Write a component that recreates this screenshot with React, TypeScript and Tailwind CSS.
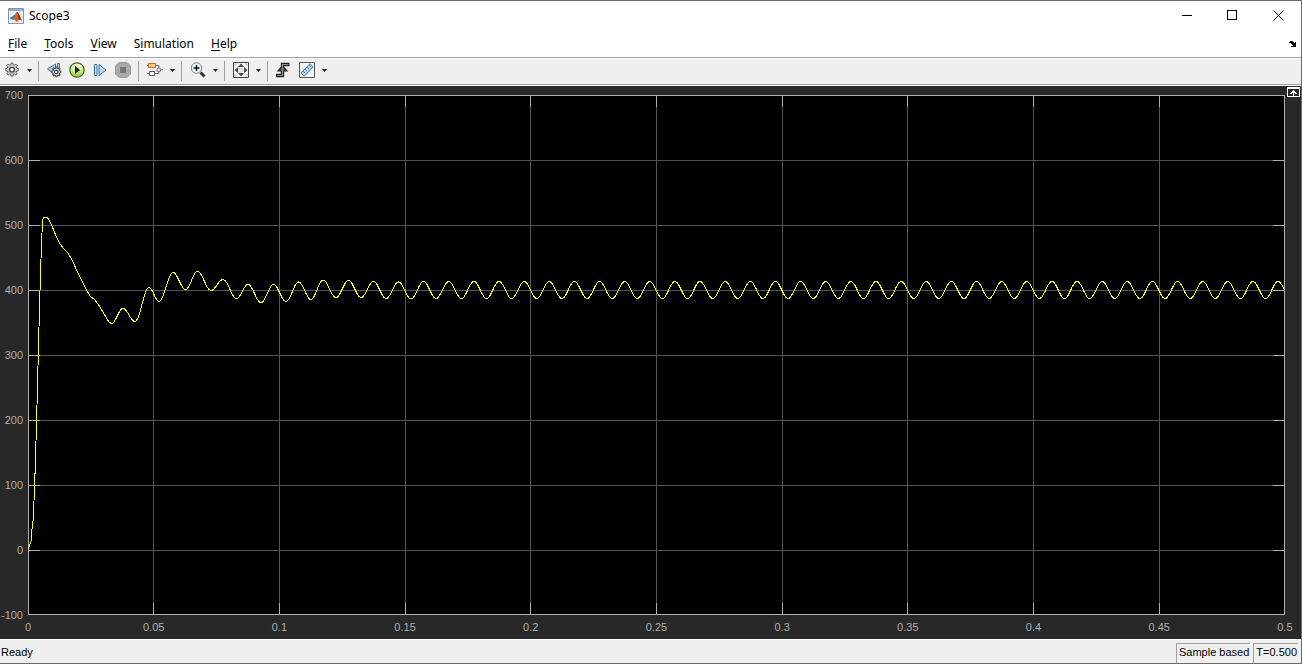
import type { ReactNode } from "react";

const W = 1257;
const H = 520;

const yTicks = [700, 600, 500, 400, 300, 200, 100, 0, -100];
const xTicks = [0, 0.05, 0.1, 0.15, 0.2, 0.25, 0.3, 0.35, 0.4, 0.45, 0.5];

const gridX = [125.5, 251.5, 377.5, 502.5, 628.5, 754.5, 879.5, 1005.5, 1131.5];
const gridY = [65.5, 130.5, 195.5, 260.5, 325.5, 390.5, 455.5];

/* Start-up transient, in plot units */
const transient: [number, number][] = [
  [0.5, 454], [2, 449], [3, 446], [4, 434], [5, 426], [6, 406], [7, 379], [8, 346], [9, 310],
  [10, 271], [11, 232], [12, 196], [13, 164], [14, 138], [14.5, 125], [16, 122.5], [18, 122.5],
  [19.5, 123], [21, 125], [24, 131], [28, 141], [32, 149], [36, 154], [40, 158], [44, 165], [50, 178],
  [54, 186], [58, 194], [62, 201], [67, 205], [72, 212], [76, 219], [81, 227], [83, 228.5],
];

/* Alternating peaks and troughs that follow */
const extrema: [number, number][] = [
  [83.5, 228.5], [95, 213.5], [107, 226.5], [121, 192.5], [131, 206.5], [145, 177.5], [157.5, 194.5],
  [169.5, 176.5], [183, 195.5], [195, 184.5], [208.5, 203.5], [220, 189.5], [233, 207.5],
  [245.5, 189.5], [258, 206.5], [270.5, 187], [283, 204.5], [295, 185], [308, 202.5], [320.5, 185.5],
  [333, 202.5], [345.5, 186.5], [358, 203.5], [370.5, 187], [383, 204], [395.5, 186.5], [408, 203.5],
];
for (let k = 0; k < 34; k++) {
  extrema.push([420.8 + k * 25.13, 186.5], [433.4 + k * 25.13, 203.5]);
}

function buildTrace() {
  const pts = [...transient];
  for (let i = 1; i < extrema.length; i++) {
    const [x0, y0] = extrema[i - 1];
    const [x1, y1] = extrema[i];
    for (let s = 1; s <= 10; s++) {
      const t = s / 10;
      const x = x0 + (x1 - x0) * t;
      if (x > W) break;
      pts.push([x, y0 + ((y1 - y0) * (1 - Math.cos(Math.PI * t))) / 2]);
    }
  }
  return pts.map(([x, y]) => `${x.toFixed(1)},${y.toFixed(1)}`).join(" ");
}

const trace = buildTrace();

function Icon({ children }: { children: ReactNode }) {
  return (
    <svg viewBox="0 0 16 16" className="size-4 shrink-0" fill="none" aria-hidden="true">
      {children}
    </svg>
  );
}

function Tool({ label, children }: { label: string; children: ReactNode }) {
  return (
    <button type="button" aria-label={label} className="flex h-[22px] w-4 items-center justify-center">
      <Icon>{children}</Icon>
    </button>
  );
}

function Caret({ label }: { label: string }) {
  return (
    <button type="button" aria-label={label} className="ml-1 flex h-[22px] w-2.5 items-center justify-center">
      <svg viewBox="0 0 5 3" className="h-[3px] w-[5px]" aria-hidden="true">
        <path d="M0 0h5L2.5 3z" fill="#222" />
      </svg>
    </button>
  );
}

function Separator() {
  return <div className="mt-0.5 h-5 w-px bg-[#a0a0a0]" />;
}

const gear =
  "M7.2 1h1.6l.4 1.6 1.3.5 1.4-.9 1.2 1.2-.9 1.4.5 1.3 1.6.4v2.2l-1.6.4-.5 1.3.9 1.4-1.2 1.2-1.4-.9-1.3.5-.4 1.6H7.2l-.4-1.6-1.3-.5-1.4.9-1.2-1.2.9-1.4-.5-1.3-1.6-.4V6.5l1.6-.4.5-1.3-.9-1.4 1.2-1.2 1.4.9 1.3-.5z";

function Toolbar() {
  return (
    <div role="toolbar" className="flex h-[25px] items-start bg-[#f0f0f0] px-1">
      <Tool label="Configuration properties">
        <path d={gear} fill="#e2e2e2" stroke="#555" />
        <circle cx="8" cy="7.8" r="4" fill="#f2f2f2" stroke="#888" strokeWidth=".6" />
        <circle cx="8" cy="7.8" r="2.4" fill="#fff" stroke="#333" strokeWidth="1.2" />
      </Tool>
      <Caret label="Configuration menu" />
      <div className="ml-1 flex">
        <Separator />
      </div>
      <div className="mx-[7px] flex gap-[7px]">
        <Tool label="Stepping options">
          <path d="M9.5 2v3.5L7 8v3L1.500 7z" fill="#a9cfea" stroke="#4b7195" />
          <path d="M11.5 1.500h2v6h-2z" fill="#c2dcf0" stroke="#4b7195" />
          <g transform="translate(4.6 4.400) scale(.72)">
            <path d={gear} fill="#ddd" stroke="#4a4a4a" strokeWidth="1.400" />
            <circle cx="8" cy="7.8" r="2.4" fill="#fff" stroke="#333" strokeWidth="1.500" />
          </g>
        </Tool>
        <Tool label="Run">
          <defs>
            <linearGradient id="run" x1="0" y1="0" x2="0" y2="1">
              <stop offset="0" stopColor="#fafff0" />
              <stop offset=".5" stopColor="#d2ed95" />
              <stop offset="1" stopColor="#8fc93a" />
            </linearGradient>
          </defs>
          <circle cx="8" cy="8" r="7.2" fill="url(#run)" stroke="#456b19" strokeWidth="1.3" />
          <path d="M6 4v8l5-4z" fill="#222" />
        </Tool>
        <Tool label="Step forward">
          <path d="M2.5 2.5H5v11H2.5z" fill="#b8d8ee" stroke="#45739e" />
          <path d="M7 2.5v11L14 8z" fill="#b8d8ee" stroke="#45739e" />
        </Tool>
        <Tool label="Stop">
          <path d="M4 .5h8L15.5 4v8L12 15.5H4L.5 12V4z" fill="#aaa" stroke="#9c9c9c" />
          <path d="M5 5h6v6H5z" fill="#777" />
        </Tool>
      </div>
      <Separator />
      <div className="ml-2 flex">
        <Tool label="Highlight block">
          <path d="M8 3.5h3.8V6M0 11.5h2M8 11.500h3.800V9.500M0 3.500h2M14 7.800h2" stroke="#666" />
          <path d="M1.500 1.500h7v4h-7z" fill="#ffc88a" stroke="#d76a13" />
          <path d="M2.500 9.500h5v4h-5z" fill="#fff" stroke="#555" />
          <circle cx="11.8" cy="7.8" r="1.9" fill="#fff" stroke="#666" />
        </Tool>
        <Caret label="Highlight block menu" />
      </div>
      <div className="mx-1 flex">
        <Separator />
      </div>
      <div className="ml-1 flex">
        <Tool label="Zoom">
          <path d="m10.5 10.5 4 4" stroke="#333" strokeWidth="3" />
          <circle cx="6.5" cy="6" r="5.2" fill="#eaf5fd" stroke="#7b8288" />
          <path d="M6.5 3v6M3.5 6h6" stroke="#111" strokeWidth="1.4" />
        </Tool>
        <Caret label="Zoom menu" />
      </div>
      <div className="mx-1 flex">
        <Separator />
      </div>
      <div className="ml-1 flex">
        <Tool label="Scale axes limits">
          <path d="M.5.5h15v15H.5z" fill="#f7f7f7" stroke="#444" />
          <path d="M4 4 8 6l4-2-2 4 2 4-4-2-4 2 2-4z" fill="#e2e2e2" />
          <path d="M8 1.500 11 5H5zM8 14.500 11 11H5zM1.500 8 5 5v6zM14.500 8 11 5v6z" fill="#484848" />
          <path d="M2 4V2h2M12 2h2v2M14 12v2h-2M4 14H2v-2" stroke="#bbb" />
        </Tool>
        <Caret label="Scale axes menu" />
      </div>
      <div className="mx-1 flex">
        <Separator />
      </div>
      <div className="ml-1 flex gap-[7px]">
        <Tool label="Triggers">
          <path d="M0 13.500h6.500V2.500H13.500" stroke="#222" strokeWidth="3.400" />
          <path d="m6.500 4 4.500 5H2z" fill="#555" stroke="#222" strokeWidth="1.200" />
          <path d="M1 13.500h5.500V2.500H12.500" stroke="#8b8b8b" strokeWidth="1.200" />
        </Tool>
        <Tool label="Cursor measurements">
          <path d="M.5.5h15v15H.5z" fill="#f4f4f4" stroke="#555" />
          <path d="M2 11 11 1.800 14.200 5 5.200 14.200z" fill="#b4daee" stroke="#47718b" />
          <path d="m4.200 9.200 1.600 1.600M6.200 7.200l1.600 1.600M8.200 5.200l1.600 1.600M10.200 3.200l1.600 1.600" stroke="#346078" strokeWidth=".8" />
        </Tool>
      </div>
      <Caret label="Measurements menu" />
    </div>
  );
}

function MenuItem({ before = "", accessKey, after }: { before?: string; accessKey: string; after: string }) {
  return (
    <button type="button">
      {before}
      <span className="underline underline-offset-2">{accessKey}</span>
      {after}
    </button>
  );
}

function Header() {
  return (
    <header className="bg-white font-['Noto_Sans',sans-serif] text-[12px] leading-4 text-black">
      <div className="flex h-[29px] items-center pl-2">
        <Icon>
          <path d="M.5.5h15v15H.5z" fill="#e9eef4" stroke="#8795a5" />
          <path d="M1 1h14v2H1z" fill="#8dafd0" />
          <path d="M1.500 10 4.500 8.500 8 5.500 6.500 11 5 12z" fill="#3176b5" />
          <path d="M5 12C7 9 7.500 4 9 4c1.500 0 3 5 5 8.500-2-1.500-3-1.500-4 .5-1 1-2 1-2.500 0S6.500 11 5 12z" fill="#e0601f" />
          <path d="M9 4c1.500 0 3 5 5 8.500-1.500-1.300-2.500-1.300-3.500-.5C11 9 10 7 9 4z" fill="#8e2417" />
        </Icon>
        <h1 className="ml-[5px] flex-1">Scope3</h1>
        <button type="button" aria-label="Minimize" className="flex h-full w-[46px] items-center justify-center">
          <svg viewBox="0 0 11 11" className="size-[11px]" stroke="#000" shapeRendering="crispEdges" aria-hidden="true">
            <path d="M1 5.5h10" />
          </svg>
        </button>
        <button type="button" aria-label="Maximize" className="flex h-full w-[46px] items-center justify-center">
          <svg viewBox="0 0 11 11" className="size-[11px]" fill="none" stroke="#000" shapeRendering="crispEdges" aria-hidden="true">
            <path d="M.5.5h9v9h-9z" />
          </svg>
        </button>
        <button type="button" aria-label="Close" className="flex h-full w-[46px] items-center justify-center">
          <svg viewBox="0 0 11 11" className="size-[11px]" stroke="#000" aria-hidden="true">
            <path d="m.5.5 10 10m0-10-10 10" />
          </svg>
        </button>
      </div>
      <nav className="flex h-[27px] items-center gap-[17px] pl-2 pr-1">
        <MenuItem accessKey="F" after="ile" />
        <MenuItem accessKey="T" after="ools" />
        <MenuItem accessKey="V" after="iew" />
        <MenuItem before="S" accessKey="i" after="mulation" />
        <MenuItem accessKey="H" after="elp" />
        <button type="button" aria-label="Dock" className="ml-auto">
          <svg viewBox="0 0 8 6" className="h-1.5 w-2" shapeRendering="crispEdges" aria-hidden="true">
            <path d="M0 1h1V0h3v1h1v1h1V1h1v5H2V5h2V4H3V3H2V2H0z" fill="#000" />
          </svg>
        </button>
      </nav>
    </header>
  );
}

function Plot() {
  return (
    <main className="relative grid min-h-0 flex-1 grid-cols-[28px_minmax(0,1fr)_16px] grid-rows-[minmax(0,1fr)_24px] bg-[#282828] pt-[9px] font-['Liberation_Sans',sans-serif] text-[11px] leading-3 text-[#afafaf]">
      <div className="flex flex-col justify-between pr-[5px] text-right">
        {yTicks.map((v) => (
          <div key={v} className="flex h-0 items-center justify-end">
            {v}
          </div>
        ))}
      </div>
      <svg viewBox={`0 0 ${W} ${H}`} preserveAspectRatio="none" className="size-full" fill="none" role="img" aria-label="Scope signal">
        <path d={`M0 0H${W}V${H}H0z`} fill="#000" />
        <g shapeRendering="crispEdges">
          {gridX.map((x) => (
            <path key={x} d={`M${x} 0V${H}`} stroke="#535353" />
          ))}
          {gridY.map((y) => (
            <path key={y} d={`M0 ${y}H${W}`} stroke="#535353" />
          ))}
          {gridX.map((x) => (
            <path key={x} d={`M${x} 0v12M${x} ${H}v-12`} stroke="#afafaf" />
          ))}
          {gridY.map((y) => (
            <path key={y} d={`M0 ${y}h12M${W} ${y}h-12`} stroke="#afafaf" />
          ))}
          <path d={`M.5.5H${W - 0.5}V${H - 0.5}H.5z`} stroke="#afafaf" />
          <polyline points={trace} stroke="#ffff11" strokeLinejoin="round" />
        </g>
      </svg>
      <div />
      <div />
      <div className="flex justify-between pt-1.5">
        {xTicks.map((v) => (
          <div key={v} className="flex w-0 justify-center">
            {v}
          </div>
        ))}
      </div>
      <button type="button" aria-label="Maximize axes" className="absolute right-px top-px">
        <svg viewBox="0 0 13 10" className="h-2.5 w-[13px]" fill="none" stroke="#fff" shapeRendering="crispEdges" aria-hidden="true">
          <path d="M.5.5h12v9H.5zM0 1.5h13" />
          <path d="M6 3h1v1h1v1h1v1h1v1H8V6H7v3H6V6H5v1H3V6h1V5h1V4h1z" fill="#fff" stroke="none" />
        </svg>
      </button>
    </main>
  );
}

export default function App() {
  return (
    <div className="flex h-screen min-h-96 w-full flex-col border-y border-r border-[#6b6b6b] bg-[#f0f0f0]">
      <Header />
      <div className="border-y border-t-[#a0a0a0] border-b-white" />
      <Toolbar />
      <div className="border-y border-t-[#a0a0a0] border-b-white" />
      <Plot />
      <footer className="flex h-6 border-t border-white pl-px pr-[3px] font-['Liberation_Sans',sans-serif] text-[11px] leading-4 text-black">
        <span className="flex-1 pt-1">Ready</span>
        <div className="flex gap-[3px] pt-[3px]">
          <span className="border-l border-t border-[#a0a0a0] pl-0.5 pr-px">Sample based</span>
          <span className="border-l border-t border-[#a0a0a0] pl-0.5 pr-px">T=0.500</span>
        </div>
      </footer>
    </div>
  );
}
